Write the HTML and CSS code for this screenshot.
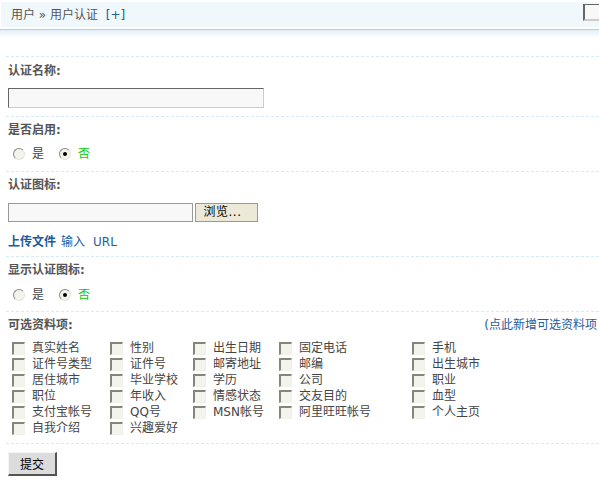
FILE: index.html
```html
<!DOCTYPE html>
<html lang="zh-CN">
<head>
<meta charset="utf-8">
<title>用户认证</title>
<link rel="stylesheet" href="styles.css">
</head>
<body>
<div class="header">
  <div class="crumb">用户 » 用户认证 <a class="plus" href="#">[+]</a></div>
  <input class="search" type="text">
</div>
<div class="hbar"></div>
<div class="spacer"></div>

<div class="sec s1">
  <div class="label">认证名称:</div>
  <input class="txt name" type="text">
</div>

<div class="sec s2">
  <div class="label">是否启用:</div>
  <div class="radios">
    <span class="radio"></span><span class="rtext">是</span>
    <span class="radio on"></span><span class="rtext green">否</span>
  </div>
</div>

<div class="sec s3">
  <div class="label">认证图标:</div>
  <div class="filerow">
    <input class="txt file" type="text"><button class="browse" type="button">浏览...</button>
  </div>
  <div class="links"><a class="b" href="#">上传文件</a><a class="i" href="#">输入</a><a class="u" href="#">URL</a></div>
</div>

<div class="sec s4">
  <div class="label">显示认证图标:</div>
  <div class="radios">
    <span class="radio"></span><span class="rtext">是</span>
    <span class="radio on"></span><span class="rtext green">否</span>
  </div>
</div>

<div class="sec s5">
  <div class="toprow">
    <div class="label">可选资料项:</div>
    <a class="addlink" href="#">(点此新增可选资料项</a>
  </div>
  <div class="grid">
    <div class="cell"><span class="cb"></span>真实姓名</div>
    <div class="cell"><span class="cb"></span>性别</div>
    <div class="cell"><span class="cb"></span>出生日期</div>
    <div class="cell"><span class="cb"></span>固定电话</div>
    <div class="cell"><span class="cb"></span>手机</div>
    <div class="cell"><span class="cb"></span>证件号类型</div>
    <div class="cell"><span class="cb"></span>证件号</div>
    <div class="cell"><span class="cb"></span>邮寄地址</div>
    <div class="cell"><span class="cb"></span>邮编</div>
    <div class="cell"><span class="cb"></span>出生城市</div>
    <div class="cell"><span class="cb"></span>居住城市</div>
    <div class="cell"><span class="cb"></span>毕业学校</div>
    <div class="cell"><span class="cb"></span>学历</div>
    <div class="cell"><span class="cb"></span>公司</div>
    <div class="cell"><span class="cb"></span>职业</div>
    <div class="cell"><span class="cb"></span>职位</div>
    <div class="cell"><span class="cb"></span>年收入</div>
    <div class="cell"><span class="cb"></span>情感状态</div>
    <div class="cell"><span class="cb"></span>交友目的</div>
    <div class="cell"><span class="cb"></span>血型</div>
    <div class="cell"><span class="cb"></span>支付宝帐号</div>
    <div class="cell"><span class="cb"></span>QQ号</div>
    <div class="cell"><span class="cb"></span>MSN帐号</div>
    <div class="cell"><span class="cb"></span>阿里旺旺帐号</div>
    <div class="cell"><span class="cb"></span>个人主页</div>
    <div class="cell"><span class="cb"></span>自我介绍</div>
    <div class="cell"><span class="cb"></span>兴趣爱好</div>
  </div>
</div>

<div class="submitrow"><button class="submit" type="button">提交</button></div>
</body>
</html>
```

FILE: styles.css
```css
html, body {
  margin: 0;
  padding: 0;
  background: #fff;
  overflow: hidden;
}
body {
  width: 599px;
  font-family: "DejaVu Sans", "Noto Sans CJK SC", sans-serif;
  font-size: 12px;
  color: #444;
}
a { text-decoration: none; }

.header {
  margin: 2px 0 0 1px;
  height: 25px;
  background: #f0f8fc;
  display: flex;
  justify-content: space-between;
  align-items: flex-start;
}
.crumb {
  padding-left: 10px;
  line-height: 26px;
  color: #555;
  white-space: nowrap;
}
.plus { color: #1d5c9c; margin-left: 4px; }
.search {
  margin: 2px -24px 0 0;
  width: 40px;
  height: 17px;
  box-sizing: border-box;
  padding: 0;
  border-style: solid;
  border-width: 1px 1px 2px 2px;
  border-color: #666 #ccc #ccc #666;
  background: #f8f8f8;
}
.hbar {
  margin-top: 2px;
  height: 8px;
  border-top: 1px solid #bccbd8;
  background: linear-gradient(#e2eff9, #ffffff);
}
.spacer {
  height: 18px;
  margin-left: 6px;
  border-bottom: 1px dashed #d6eaf8;
}

.sec {
  margin-left: 6px;
  padding-left: 2px;
  border-bottom: 1px dashed #d6eaf8;
}
.label {
  font-weight: bold;
  color: #555;
  line-height: 20px;
  height: 20px;
}
.s1 { padding-top: 4px; padding-bottom: 8px; }
.s2 { padding-top: 3px; padding-bottom: 7px; }
.s3 { padding-top: 3px; padding-bottom: 4px; }
.s4 { padding-top: 3px; padding-bottom: 6px; }
.s5 { padding-top: 3px; padding-bottom: 7px; }

.txt {
  display: block;
  box-sizing: border-box;
  margin: 0;
  padding: 0;
  background: #f8f8f8;
  font: inherit;
}
.name {
  margin-top: 7px;
  width: 256px;
  height: 20px;
  border-style: solid;
  border-width: 1px;
  border-color: #666 #ccc #ccc #666;
}

.radios {
  margin-top: 4px;
  height: 20px;
  display: flex;
  align-items: center;
  padding-left: 5px;
}
.s4 .radios { margin-top: 5px; }
.radio {
  width: 12px;
  height: 12px;
  box-sizing: border-box;
  border-radius: 50%;
  border: 1px solid;
  border-color: #8a8a80 #e4e4dc #e4e4dc #8a8a80;
  background: #f4f4ee;
  display: flex;
  align-items: center;
  justify-content: center;
}
.radio.on::after {
  content: "";
  width: 4px;
  height: 4px;
  border-radius: 50%;
  background: #000;
}
.rtext {
  margin-left: 7px;
  margin-right: 15px;
  line-height: 20px;
  color: #444;
}
.green { color: #00cc00; }

.filerow {
  margin-top: 8px;
  display: flex;
  height: 19px;
}
.file {
  width: 185px;
  height: 19px;
  border: 1px solid #999;
}
.browse {
  margin: 0 0 0 2px;
  width: 63px;
  height: 19px;
  padding: 0 8px 0 0;
  border: 1px solid #999;
  background: #ece9d8;
  color: #000;
  font: inherit;
  line-height: 17px;
  letter-spacing: 0.5px;
}
.links {
  margin-top: 10px;
  line-height: 20px;
  height: 20px;
  display: flex;
}
.links a { color: #1d5c9c; }
.links .b { font-weight: bold; }
.links .i { margin-left: 5px; }
.links .u { margin-left: 8px; }

.toprow {
  display: flex;
  justify-content: space-between;
  align-items: center;
  padding-right: 2px;
}
.addlink { color: #1d5c9c; line-height: 20px; }

.grid {
  margin: 5px 0 0 4px;
  display: grid;
  grid-template-columns: 98px 83px 86px 133px auto;
  grid-auto-rows: 16px;
}
.cell {
  display: flex;
  align-items: center;
  white-space: nowrap;
  color: #444;
  line-height: 16px;
}
.cb {
  width: 13px;
  height: 13px;
  box-sizing: border-box;
  flex: none;
  margin-right: 7px;
  border-style: solid;
  border-width: 2px 1px 1px 2px;
  border-color: #85857a #f0f0ea #f0f0ea #85857a;
  background: #f4f4ee;
}

.submitrow {
  padding: 8px 0 0 8px;
}
.submit {
  width: 49px;
  height: 24px;
  margin: 0;
  padding: 0;
  box-sizing: border-box;
  border-style: solid;
  border-width: 1px 2px 2px 1px;
  border-color: #f4f4f4 #555 #555 #f4f4f4;
  background: #dcdcdc;
  color: #000;
  font: inherit;
}
```
